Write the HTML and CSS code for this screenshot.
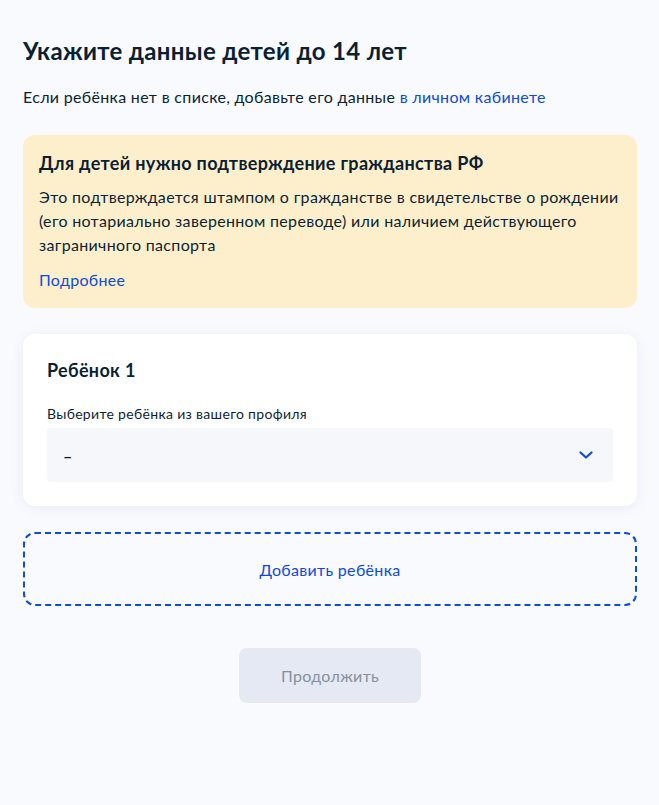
FILE: index.html
```html
<!DOCTYPE html>
<html lang="ru">
<head>
    <meta charset="UTF-8">
    <meta name="viewport" content="width=device-width, initial-scale=1.0">
    <title>Данные детей</title>
    <link rel="stylesheet" href="styles.css">
</head>
<body>
    <div class="page">
        <h1 class="title">Укажите данные детей до 14 лет</h1>
        <p class="lead">Если ребёнка нет в списке, добавьте его данные <a href="#" class="link">в личном кабинете</a></p>

        <div class="notice">
            <h3 class="notice-title">Для детей нужно подтверждение гражданства РФ</h3>
            <p class="notice-text">Это подтверждается штампом о гражданстве в свидетельстве о рождении (его нотариально заверенном переводе) или наличием действующего заграничного паспорта</p>
            <a href="#" class="link notice-link">Подробнее</a>
        </div>

        <div class="card">
            <h3 class="card-title">Ребёнок 1</h3>
            <label class="field-label" for="child">Выберите ребёнка из вашего профиля</label>
            <div class="select" id="child">
                <span class="select-value">–</span>
                <svg class="chevron" width="14" height="8" viewBox="0 0 14 8">
                    <path d="M1.5 1.5 L7 6.5 L12.5 1.5" fill="none" stroke="#0d4cd3" stroke-width="2.2" stroke-linecap="round" stroke-linejoin="round"/>
                </svg>
            </div>
        </div>

        <button class="add-child" type="button">Добавить ребёнка</button>

        <div class="actions">
            <button class="btn-next" type="button" disabled>Продолжить</button>
        </div>
    </div>
</body>
</html>
```

FILE: styles.css
```css
body {
    margin: 0;
    background-color: #f8fafe;
    font-family: Lato, "Noto Sans", sans-serif;
    letter-spacing: 0.02em;
    color: #0b1f33;
}
.page {
    padding: 35px 22px 40px 23px;
}
.title {
    margin: 0;
    font-size: 24px;
    line-height: 32px;
    font-weight: 700;
}
.lead {
    margin: 18px 0 0;
    font-size: 16px;
    line-height: 24px;
}
.link {
    color: #0d4cd3;
    text-decoration: none;
}
.notice {
    margin-top: 26px;
    background-color: #feefcc;
    border-radius: 12px;
    padding: 16px 16px 16px 16px;
}
.notice-title {
    margin: 0 0 10px;
    font-size: 18px;
    line-height: 24px;
    font-weight: 700;
}
.notice-text {
    margin: 0;
    font-size: 16px;
    line-height: 24px;
}
.notice-link {
    display: block;
    margin-top: 11px;
    font-size: 16px;
    line-height: 24px;
}
.card {
    margin-top: 26px;
    background: #fff;
    border-radius: 12px;
    padding: 24px;
    box-shadow: 0 2px 12px rgba(86, 112, 169, 0.1);
}
.card-title {
    margin: 0 0 22px;
    font-size: 18px;
    line-height: 24px;
    font-weight: 700;
}
.field-label {
    display: block;
    font-size: 14px;
    line-height: 20px;
    margin-bottom: 4px;
}
.select {
    display: flex;
    align-items: center;
    justify-content: space-between;
    height: 54px;
    padding: 0 20px 0 16px;
    background-color: #f5f7fa;
    border-radius: 4px;
    font-size: 16px;
}
.select-value {
    font-weight: 700;
}
.chevron {
    display: block;
}
.add-child {
    display: block;
    width: 100%;
    margin-top: 26px;
    height: 74px;
    border: 2px dashed #0d4cd3;
    border-radius: 12px;
    background: transparent;
    color: #0d4cd3;
    font-family: Lato, "Noto Sans", sans-serif;
    letter-spacing: 0.02em;
    font-size: 16px;
    cursor: pointer;
}
.actions {
    display: flex;
    justify-content: center;
    margin-top: 42px;
}
.btn-next {
    width: 182px;
    height: 55px;
    border: none;
    border-radius: 8px;
    background-color: #e4e9f3;
    color: #86909c;
    font-family: Lato, "Noto Sans", sans-serif;
    letter-spacing: 0.02em;
    font-size: 16px;
}
```
